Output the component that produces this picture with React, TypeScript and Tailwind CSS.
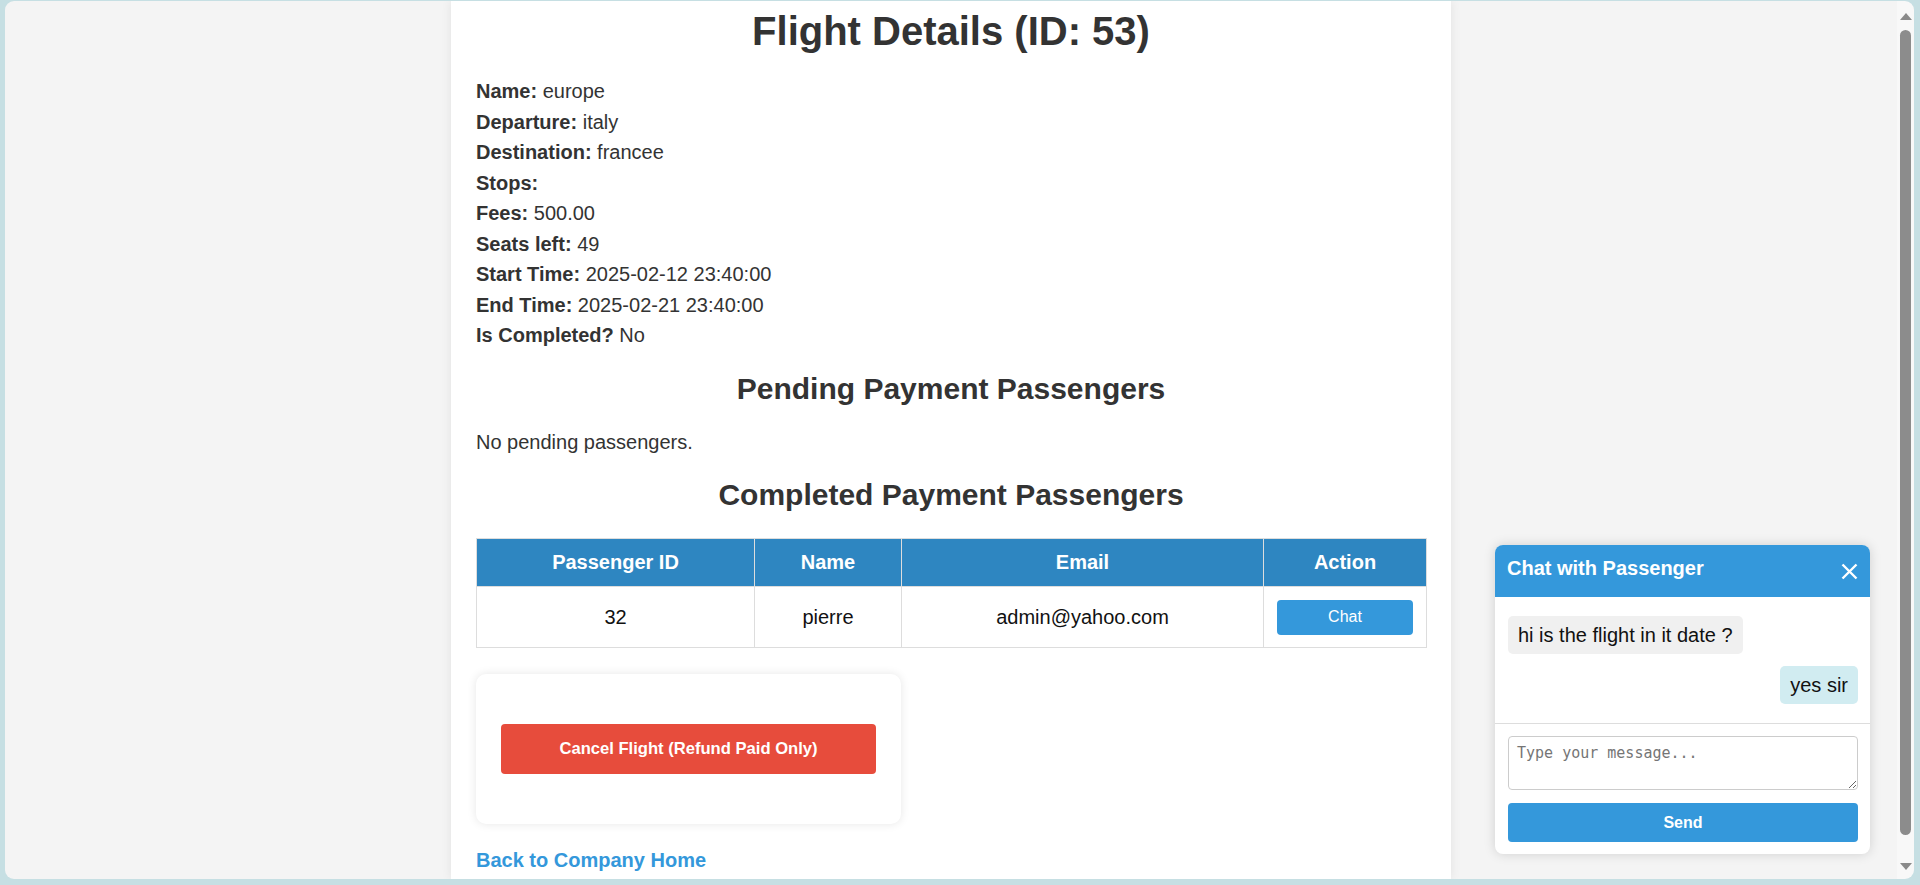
import React from "react";

const font = { fontFamily: '"Liberation Sans", Arial, sans-serif' };

function InfoLine({ label, value }: { label: string; value: string }) {
  return (
    <div className="leading-[30.5px] text-[20px] text-[#333]">
      <span className="font-bold">{label}</span>
      {value ? " " + value : ""}
    </div>
  );
}

export default function App() {
  return (
    <div
      className="w-screen h-[885px] bg-[#c6dfe3] pt-[1px] pl-[5px] pr-[6px] pb-[6px] overflow-hidden"
      style={font}
    >
      <div className="h-full w-full rounded-[9px] overflow-hidden flex">
        {/* page */}
        <div className="flex-1 bg-[#f4f4f4] relative overflow-hidden">
          <div className="w-[1000px] mx-auto bg-white h-full px-[25px] pt-[7px] shadow-[0_0_10px_rgba(0,0,0,0.08)]">
            <h1 className="text-center text-[40px] leading-[46px] font-bold text-[#333]">
              Flight Details (ID: 53)
            </h1>
            <div className="mt-[22px]">
              <InfoLine label="Name:" value="europe" />
              <InfoLine label="Departure:" value="italy" />
              <InfoLine label="Destination:" value="francee" />
              <InfoLine label="Stops:" value="" />
              <InfoLine label="Fees:" value="500.00" />
              <InfoLine label="Seats left:" value="49" />
              <InfoLine label="Start Time:" value="2025-02-12 23:40:00" />
              <InfoLine label="End Time:" value="2025-02-21 23:40:00" />
              <InfoLine label="Is Completed?" value="No" />
            </div>
            <h2 className="mt-[21px] text-center text-[30px] leading-[34.5px] font-bold text-[#333]">
              Pending Payment Passengers
            </h2>
            <p className="mt-[24.5px] text-[20px] leading-[23px] text-[#333]">No pending passengers.</p>
            <h2 className="mt-[24.5px] text-center text-[30px] leading-[34.5px] font-bold text-[#333]">
              Completed Payment Passengers
            </h2>
            <table className="mt-[25.5px] w-full border-collapse table-fixed text-[20px]">
              <colgroup>
                <col className="w-[278px]" />
                <col className="w-[147px]" />
                <col className="w-[362px]" />
                <col className="w-[163px]" />
              </colgroup>
              <thead>
                <tr className="h-[48px] bg-[#2e86c1] text-white">
                  <th className="border border-[#ddd] font-bold p-0 leading-[23px]">Passenger ID</th>
                  <th className="border border-[#ddd] font-bold p-0 leading-[23px]">Name</th>
                  <th className="border border-[#ddd] font-bold p-0 leading-[23px]">Email</th>
                  <th className="border border-[#ddd] font-bold p-0 leading-[23px]">Action</th>
                </tr>
              </thead>
              <tbody>
                <tr className="h-[61px] text-[#111]">
                  <td className="border border-[#ddd] text-center p-0">32</td>
                  <td className="border border-[#ddd] text-center p-0">pierre</td>
                  <td className="border border-[#ddd] text-center p-0">admin@yahoo.com</td>
                  <td className="border border-[#ddd] text-center px-[13px] py-0">
                    <button className="w-full h-[35px] rounded-[4px] bg-[#3498db] text-white text-[16px] leading-[18px]">
                      Chat
                    </button>
                  </td>
                </tr>
              </tbody>
            </table>
            <div className="mt-[25.5px] w-[425px] rounded-[10px] bg-white shadow-[0_0_10px_rgba(0,0,0,0.1)] px-[25px] py-[50px]">
              <button className="w-full h-[50px] rounded-[4px] bg-[#e74c3c] text-white font-bold text-[16.6px] leading-[19px]">
                Cancel Flight (Refund Paid Only)
              </button>
            </div>
            <a className="block mt-[25px] text-[20px] leading-[23px] font-bold text-[#3498db]" href="#">
              Back to Company Home
            </a>
          </div>

          {/* chat panel overlay */}
          <div className="absolute right-[27px] bottom-[25px] w-[375px] bg-white rounded-[8px] overflow-hidden shadow-[0_0_12px_rgba(0,0,0,0.15)]">
            <div className="h-[52px] bg-[#3498db] px-[12px] flex justify-between">
              <div className="pt-[12px] text-white font-bold text-[20px] leading-[23px]">Chat with Passenger</div>
              <svg className="self-center mt-[1px]" width="17" height="17" viewBox="0 0 17 17">
                <path d="M1.5 1.5 L15.5 15.5 M15.5 1.5 L1.5 15.5" stroke="white" strokeWidth="2.4" strokeLinecap="butt" />
              </svg>
            </div>
            <div className="flex flex-col gap-[12px] pt-[19px] pb-[19px] pl-[13px] pr-[12px]">
              <div className="self-start h-[38px] flex items-center px-[10px] rounded-[5px] bg-[#f0f0f0] text-[20px] leading-[23px] text-[#111]">
                hi is the flight in it date ?
              </div>
              <div className="self-end h-[38px] flex items-center px-[10px] rounded-[5px] bg-[#d1ecf1] text-[20px] leading-[23px] text-[#111]">
                yes sir
              </div>
            </div>
            <div className="border-t border-[#ddd] pt-[12px] pb-[12px] pl-[13px] pr-[12px]">
              <textarea
                className="block w-full h-[54px] mb-[13px] border border-[#ccc] rounded-[4px] px-[8px] py-[8px] text-[15px] leading-[17px] placeholder:text-[#757575] outline-none"
                style={{ fontFamily: '"DejaVu Sans Mono", monospace' }}
                placeholder="Type your message..."
              />
              <button className="w-full h-[39px] rounded-[4px] bg-[#3498db] text-white font-bold text-[16px] leading-[18px]">
                Send
              </button>
            </div>
          </div>
        </div>

        {/* scrollbar */}
        <div className="w-[17px] bg-[#f8f8f8] flex flex-col items-center pt-[12px]">
          <svg width="12" height="7" viewBox="0 0 12 7">
            <path d="M6 0 L12 7 L0 7 Z" fill="#8a8a8a" />
          </svg>
          <div className="mt-[10px] w-[11px] h-[805px] rounded-[6px] bg-[#8c8c8c]" />
          <svg className="mt-[28px]" width="12" height="7" viewBox="0 0 12 7">
            <path d="M0 0 L12 0 L6 7 Z" fill="#8a8a8a" />
          </svg>
        </div>
      </div>
    </div>
  );
}
